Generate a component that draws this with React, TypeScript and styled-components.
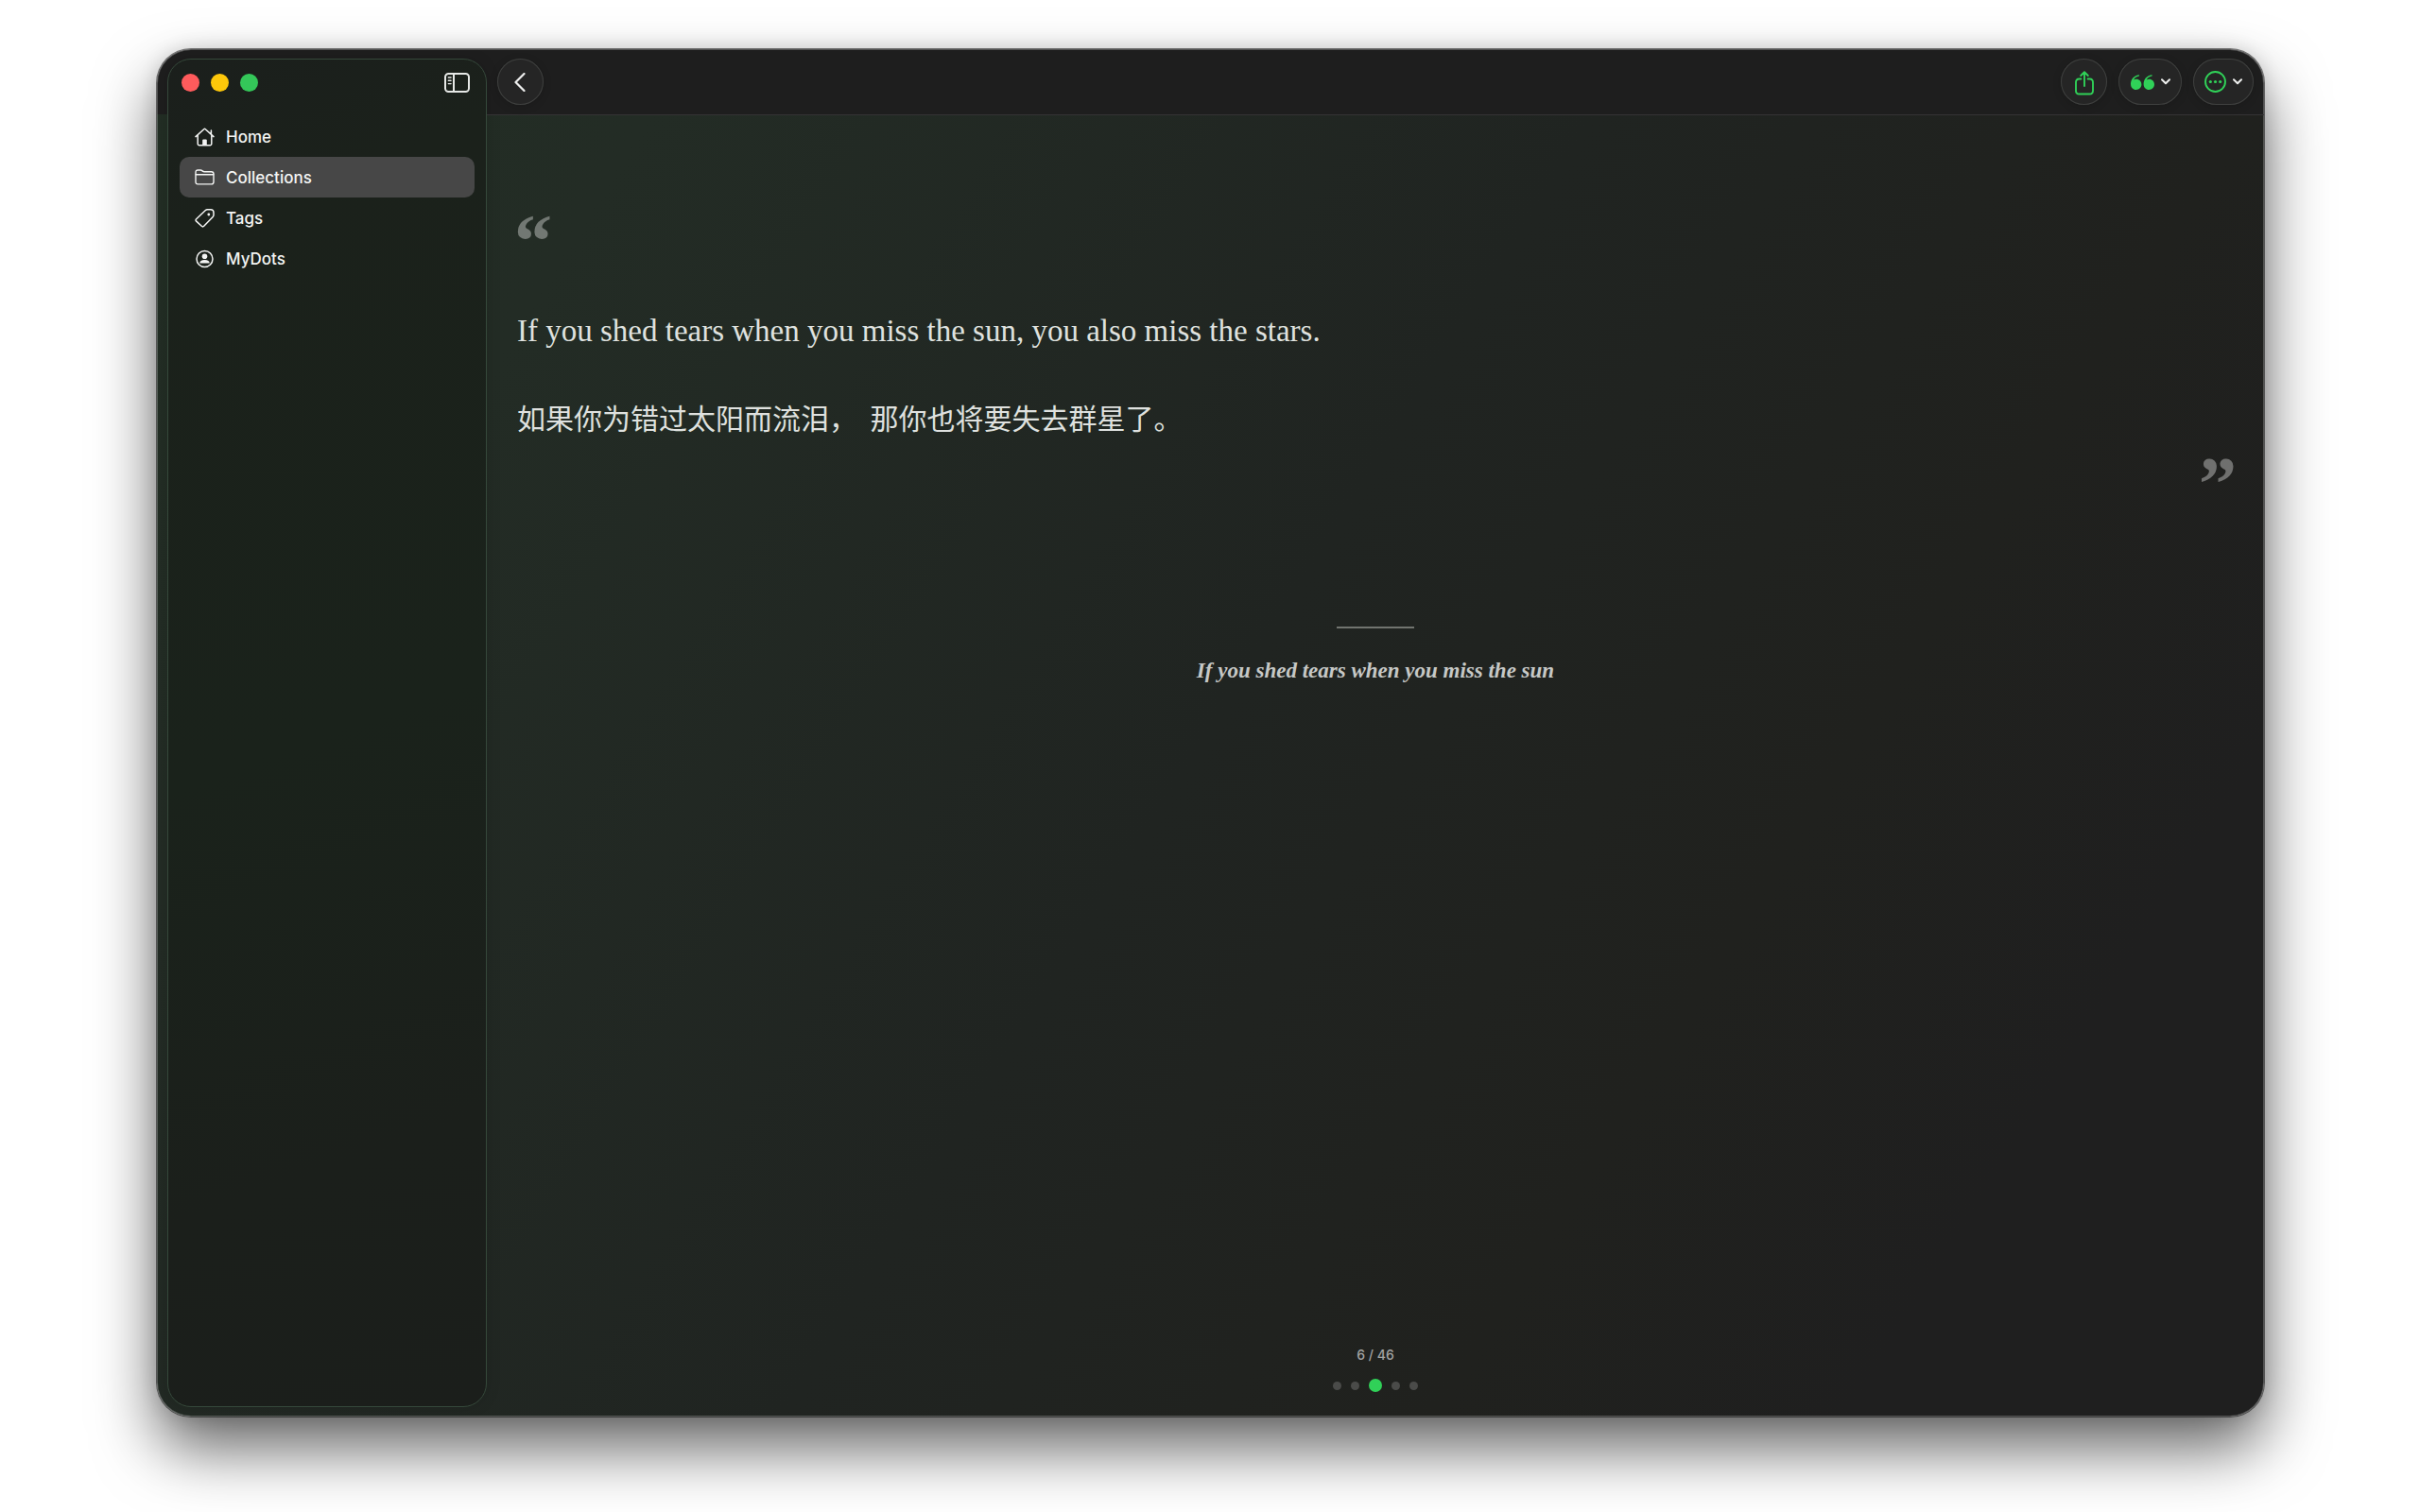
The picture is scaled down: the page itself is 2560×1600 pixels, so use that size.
import React from "react";
import styled, { createGlobalStyle, css } from "styled-components";

const UI_FONT = `Inter, "Liberation Sans", sans-serif`;
const SERIF_FONT = `Charter, "Liberation Serif", "Noto Sans CJK SC", serif`;
const GREEN = "#30d158";

const GlobalStyle = createGlobalStyle`
  *, *::before, *::after { box-sizing: border-box; }
  body { margin: 0; background: #fff; font-family: ${UI_FONT}; }
  button { font: inherit; color: inherit; border: 0; padding: 0; background: none; cursor: pointer; }
  svg { display: block; }
`;

const Desktop = styled.div`
  display: flex;
  height: 100vh;
  padding: 52px 165px 101px 166px;
  overflow: hidden;
`;

const Window = styled.div`
  display: flex;
  flex: 1;
  min-width: 0;
  padding: 10px 0 10px 11px;
  border-radius: 36px;
  overflow: hidden;
  color: #fff;
  background:
    linear-gradient(#1e1e1e, #1e1e1e) 0 0 / 100% 69px no-repeat,
    linear-gradient(122deg, #222e24 0%, #232c25 18%, #202421 50%, #20211e 72%, #1f1f1f 86%);
  box-shadow:
    inset 0 0 0 1px rgba(255, 255, 255, 0.24),
    0 0 0 1px rgba(0, 0, 0, 0.5),
    0 0 20px rgba(0, 0, 0, 0.14),
    0 34px 66px rgba(0, 0, 0, 0.6);
`;

const Sidebar = styled.aside`
  display: flex;
  flex-direction: column;
  width: 338px;
  flex-shrink: 0;
  border: 1px solid #35483a;
  border-radius: 25px;
  background: linear-gradient(160deg, #1b1f1c 0%, #1b211b 12%, #1a221b 50%, #1b1f1b 80%, #1b1e1b 100%);
  box-shadow: 0 0 16px rgba(0, 0, 0, 0.12);
`;

const SidebarHeader = styled.div`
  display: flex;
  align-items: center;
  justify-content: space-between;
  height: 48px;
  padding: 0 17px 0 14px;
`;

const TrafficLights = styled.div`
  display: flex;
  gap: 12px;
`;

const Light = styled.button<{ $color: string }>`
  width: 19px;
  height: 19px;
  border-radius: 50%;
  background: ${(p) => p.$color};
`;

const IconButton = styled.button`
  color: #e6e8e6;
`;

const Nav = styled.nav`
  display: flex;
  flex-direction: column;
  padding: 12px;
`;

const NavItem = styled.a<{ $active?: boolean }>`
  display: flex;
  align-items: center;
  gap: 12px;
  height: 43px;
  padding: 0 16px;
  border-radius: 10px;
  color: #f4f5f4;
  font-size: 17px;
  font-weight: 500;
  line-height: 24px;
  text-decoration: none;
  ${(p) => p.$active && css`background: #474747;`}
`;

const Main = styled.main`
  display: flex;
  flex-direction: column;
  flex: 1;
  min-width: 0;
`;

const Toolbar = styled.header`
  display: flex;
  align-items: center;
  gap: 12px;
  height: 60px;
  padding: 0 11px 10px;
  border-bottom: 1px solid #353335;
`;

const ToolButton = styled.button<{ $wide?: number }>`
  display: flex;
  align-items: center;
  justify-content: center;
  gap: 7px;
  width: ${(p) => p.$wide ?? 49}px;
  height: 49px;
  border-radius: 25px;
  color: ${GREEN};
  background: #252525;
  box-shadow: inset 0 0 0 1px #3f403f, 0 2px 10px rgba(0, 0, 0, 0.15);
`;

const Spacer = styled.div`
  flex: 1;
`;

const Content = styled.article`
  display: flex;
  flex-direction: column;
  flex: 1;
  padding: 89px 32px 0;
  font-family: ${SERIF_FONT};
`;

const QuoteMark = styled.span<{ $end?: boolean }>`
  align-self: ${(p) => (p.$end ? "flex-end" : "flex-start")};
  height: 68px;
  margin: 0 -3px;
  font-size: 80px;
  font-weight: 700;
  line-height: 88px;
  color: rgba(255, 255, 255, 0.36);
`;

const Quote = styled.blockquote`
  display: flex;
  flex-direction: column;
  gap: 44px;
  margin: 48px 0 3px;
  font-size: 33px;
  line-height: 47px;
  color: #dfe1df;
  p { margin: 0; }
`;

const Chinese = styled.p`
  font-family: "Noto Sans CJK SC", sans-serif;
  font-size: 30px;
  font-weight: 400;
  white-space: pre-wrap;
`;

const Source = styled.footer`
  display: flex;
  flex-direction: column;
  align-items: center;
  gap: 29px;
  padding-top: 127px;
  color: #c6c8c6;
  font-size: 23px;
  line-height: 32px;
`;

const Rule = styled.hr`
  width: 82px;
  height: 2px;
  margin: 0;
  border: 0;
  background: #71746f;
`;

const SourceTitle = styled.cite`
  font-style: italic;
  font-weight: 700;
`;

const Pager = styled.div`
  display: flex;
  flex-direction: column;
  align-items: center;
  gap: 15px;
  padding-bottom: 16px;
  color: #a3a4a3;
  font-size: 14px;
  font-weight: 500;
  line-height: 20px;
`;

const Dots = styled.div`
  display: flex;
  align-items: center;
  gap: 10px;
`;

const Dot = styled.button<{ $active?: boolean }>`
  width: ${(p) => (p.$active ? 14 : 9)}px;
  height: ${(p) => (p.$active ? 14 : 9)}px;
  border-radius: 50%;
  background: ${(p) => (p.$active ? GREEN : "#4a4b49")};
`;

const line = { fill: "none", stroke: "currentColor", strokeLinecap: "round", strokeLinejoin: "round" } as const;

const HomeIcon = () => (
  <svg width="21" height="20" viewBox="0 0 21 20" {...line} strokeWidth="1.5">
    <path d="M1 9.6 9.7 1.7a1.2 1.2 0 0 1 1.6 0L20 9.6M3.2 8v9.3q0 1.4 1.4 1.4h11.8q1.4 0 1.4-1.4V8M17.4 6.8V3" />
    <path d="M8.2 18.4v-5q0-.9.9-.9h2.8q.9 0 .9.9v5z" fill="currentColor" stroke="none" />
  </svg>
);

const FolderIcon = () => (
  <svg width="21" height="18" viewBox="0 0 21 18" {...line} strokeWidth="1.4">
    <path d="M1 3.4Q1 1 3.4 1h2.7q1 0 1.7.6l.6.5q.7.6 1.7.6h7.5Q20 2.7 20 5.1v8.4q0 2.4-2.4 2.4H3.4Q1 15.9 1 13.5z" />
    <path d="M1.3 5.8h18.4" />
  </svg>
);

const TagIcon = () => (
  <svg width="21" height="20" viewBox="0 0 21 20" {...line} strokeWidth="1.5">
    <path d="M11.4 1.5Q12.2.8 13.3.8h3.5q3.2 0 3.2 3.2v2.6q0 1.1-.8 1.9l-9.5 9.8q-1.2 1.2-2.4 0l-5.600-5.2q-1.300-1.200 0-2.400z" />
    <circle cx="14.8" cy="6" r="1.4" fill="currentColor" stroke="none" />
  </svg>
);

const PersonIcon = () => (
  <svg width="21" height="20" viewBox="0 0 21 20" {...line} strokeWidth="1.5">
    <circle cx="10.5" cy="10" r="8.5" />
    <circle cx="10.5" cy="7.3" r="2.8" fill="currentColor" stroke="none" />
    <path d="M5.3 14.6q0-3.600 5.200-3.600t5.200 3.600z" fill="currentColor" stroke="none" />
  </svg>
);

const SidebarIcon = () => (
  <svg width="27" height="21" viewBox="0 0 27 21" {...line} strokeWidth="2">
    <rect x="1" y="1" width="25" height="19" rx="3.5" />
    <path d="M10 1v19" />
    <path d="M4.3 5h2.8M4.3 8.3h2.8M4.3 11.6h2.8" strokeWidth="1.4" />
  </svg>
);

const BackIcon = () => (
  <svg width="14" height="20" viewBox="0 0 14 20" {...line} stroke="#eeefee" strokeWidth="2.2">
    <path d="M10.5 1 1.5 10l9 9" />
  </svg>
);

const ShareIcon = () => (
  <svg width="20" height="28" viewBox="0 -2 20 28" {...line} strokeWidth="1.9">
    <path d="M6.4 8.5H4.5Q1 8.5 1 12v9q0 3.5 3.5 3.5h11Q19 24.5 19 21v-9q0-3.5-3.5-3.5h-1.9M10 16V1.5M6.2 5 10 1.3 13.8 5" />
  </svg>
);

const QuoteIcon = () => (
  <svg width="25" height="16" viewBox="0 0 25 16" fill="currentColor">
    <path d="M5.7 16C2.4 16 0 13.6 0 10 0 5 3.2 1 8.3.2q.8-.1.9.6.1.6-.6.8C5.6 2.5 3.9 3.7 3.1 5.5q1.2-.8 2.8-.8c3.1 0 5.5 2.4 5.5 5.6S8.9 16 5.7 16z" />
    <path d="M19.3 16c-3.3 0-5.7-2.4-5.7-6 0-5 3.2-9 8.3-9.8q.8-.1.9.6.1.6-.6.8c-3 .9-4.700 2.100-5.500 3.900q1.200-.8 2.800-.8c3.100 0 5.500 2.400 5.500 5.600S22.500 16 19.300 16z" />
  </svg>
);

const MoreIcon = () => (
  <svg width="23" height="23" viewBox="0 0 23 23" fill="none">
    <circle cx="11.5" cy="11.5" r="10.5" stroke="currentColor" strokeWidth="1.9" />
    {[6.3, 11.5, 16.7].map((x) => (
      <circle key={x} cx={x} cy="11.5" r="1.6" fill="currentColor" />
    ))}
  </svg>
);

const Chevron = () => (
  <svg width="10" height="7" viewBox="0 0 10 7" {...line} stroke="#eeefee" strokeWidth="2">
    <path d="m1 1.3 4 4 4-4" />
  </svg>
);

const NAV = [
  { label: "Home", Icon: HomeIcon },
  { label: "Collections", Icon: FolderIcon, active: true },
  { label: "Tags", Icon: TagIcon },
  { label: "MyDots", Icon: PersonIcon },
];

const LIGHTS = [
  { label: "Close", color: "#ff5b5c" },
  { label: "Minimize", color: "#fdc70a" },
  { label: "Zoom", color: "#34c759" },
];

export default function App() {
  return (
    <>
      <GlobalStyle />
      <Desktop>
        <Window>
          <Sidebar>
            <SidebarHeader>
              <TrafficLights>
                {LIGHTS.map((l) => (
                  <Light key={l.label} $color={l.color} aria-label={l.label} />
                ))}
              </TrafficLights>
              <IconButton aria-label="Toggle sidebar"><SidebarIcon /></IconButton>
            </SidebarHeader>
            <Nav>
              {NAV.map(({ label, Icon, active }) => (
                <NavItem key={label} href={`#${label.toLowerCase()}`} $active={active}>
                  <Icon />
                  {label}
                </NavItem>
              ))}
            </Nav>
          </Sidebar>
          <Main>
            <Toolbar>
              <ToolButton aria-label="Back"><BackIcon /></ToolButton>
              <Spacer />
              <ToolButton aria-label="Share"><ShareIcon /></ToolButton>
              <ToolButton $wide={67} aria-label="Quote style"><QuoteIcon /><Chevron /></ToolButton>
              <ToolButton $wide={64} aria-label="More"><MoreIcon /><Chevron /></ToolButton>
            </Toolbar>
            <Content>
              <QuoteMark>“</QuoteMark>
              <Quote>
                <p>If you shed tears when you miss the sun, you also miss the stars.</p>
                <Chinese lang="zh-CN">如果你为错过太阳而流泪，{"  "}那你也将要失去群星了。</Chinese>
              </Quote>
              <QuoteMark $end>”</QuoteMark>
              <Source>
                <Rule />
                <SourceTitle>If you shed tears when you miss the sun</SourceTitle>
              </Source>
            </Content>
            <Pager>
              <span>6 / 46</span>
              <Dots>
                {[4, 5, 6, 7, 8].map((n) => (
                  <Dot key={n} $active={n === 6} aria-label={`Quote ${n}`} />
                ))}
              </Dots>
            </Pager>
          </Main>
        </Window>
      </Desktop>
    </>
  );
}
